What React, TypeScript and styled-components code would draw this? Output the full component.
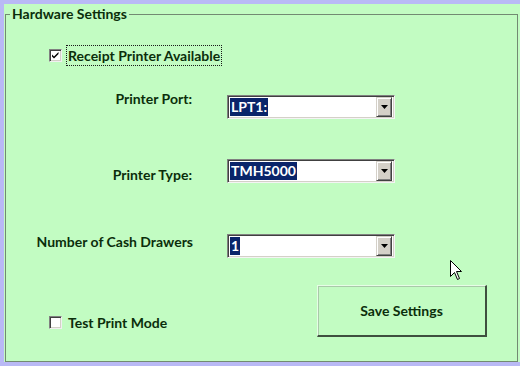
import React from "react";
import styled, { createGlobalStyle } from "styled-components";

const Global = createGlobalStyle`
  html, body { margin: 0; padding: 0; background: #b9b9f5; }
  body { font-family: Lato, "DejaVu Sans", sans-serif; }
`;

const TEXT = "#0b2e0b";
const GREEN = "#c2fcc2";

const Page = styled.div`
  position: relative;
  width: 520px;
  height: 366px;
  padding: 4px 0 4px 4px;
  box-sizing: border-box;
  background: #b9b9f5;
  overflow: hidden;
`;

const Panel = styled.div`
  background: ${GREEN};
  height: 358px;
  width: 516px;
  box-sizing: border-box;
  padding: 0 2px 0 1px;
`;

const Group = styled.fieldset`
  margin: 0;
  padding: 0;
  height: 358px;
  box-sizing: border-box;
  border: 1px solid #728a72;
  display: block;
  min-width: 0;
`;

const Legend = styled.legend`
  margin-left: 4px;
  padding: 0 2px;
  font-weight: 700;
  font-size: 14px;
  line-height: 20px;
  color: ${TEXT};
`;

const Body = styled.div`
  display: flex;
  flex-direction: column;
`;

const CheckRow = styled.label<{ $top: number }>`
  display: flex;
  align-items: center;
  height: 21px;
  margin-top: ${(p) => p.$top}px;
  padding-left: 43px;
  gap: 4px;
  cursor: default;
`;

const Box = styled.span`
  width: 13px;
  height: 13px;
  box-sizing: border-box;
  background: #fff;
  border-top: 1px solid #808080;
  border-left: 1px solid #808080;
  border-right: 1px solid #f0f0f0;
  border-bottom: 1px solid #f0f0f0;
  box-shadow: inset 1px 1px 0 #404040, inset -1px -1px 0 #d4d0c8;
  display: flex;
  align-items: center;
  justify-content: center;
  flex: none;
`;

const CheckText = styled.span<{ $focus?: boolean }>`
  font-weight: 700;
  font-size: 14px;
  line-height: 19px;
  color: ${TEXT};
  padding: 0 1px;
  border: 1px dotted ${(p) => (p.$focus ? "#1a1a1a" : "transparent")};
`;

const FieldRow = styled.div<{ $top: number }>`
  display: grid;
  grid-template-columns: 221px 168px;
  margin-top: ${(p) => p.$top}px;
  height: 24px;
`;

const FieldLabel = styled.span<{ $right: number; $top: number }>`
  justify-self: end;
  align-self: start;
  margin-right: ${(p) => p.$right}px;
  margin-top: ${(p) => p.$top}px;
  font-weight: 700;
  font-size: 14px;
  line-height: 16px;
  color: ${TEXT};
  white-space: nowrap;
`;

const Combo = styled.div`
  height: 24px;
  box-sizing: border-box;
  background: #fff;
  border-top: 1px solid #808080;
  border-left: 1px solid #808080;
  border-right: 1px solid #f4f4f4;
  border-bottom: 1px solid #f4f4f4;
  box-shadow: inset 1px 1px 0 #404040, inset -1px -1px 0 #d4d0c8;
  display: flex;
  align-items: center;
  padding: 2px;
`;

const ComboValue = styled.div`
  flex: 1;
  display: flex;
  align-items: center;
`;

const Selected = styled.span`
  background: #0a246a;
  color: #fff;
  font-weight: 700;
  font-size: 14px;
  line-height: 18px;
  padding: 0 1px;
`;

const DropButton = styled.div`
  width: 16px;
  height: 20px;
  box-sizing: border-box;
  background: #d4d0c8;
  border-top: 1px solid #d4d0c8;
  border-left: 1px solid #d4d0c8;
  border-right: 1px solid #404040;
  border-bottom: 1px solid #404040;
  box-shadow: inset 1px 1px 0 #fff, inset -1px -1px 0 #808080;
  display: flex;
  align-items: center;
  justify-content: center;
`;

const BottomRow = styled.div`
  display: flex;
  justify-content: space-between;
  align-items: flex-start;
  margin-top: 27px;
  padding-right: 30px;
`;

const SaveButton = styled.button`
  width: 170px;
  height: 52px;
  box-sizing: border-box;
  background: ${GREEN};
  border-top: 1px solid #e6fde6;
  border-left: 1px solid #e6fde6;
  border-right: 2px solid #3f4f3f;
  border-bottom: 2px solid #3f4f3f;
  box-shadow: inset 1px 1px 0 #a9c9a9;
  font-family: Lato, "DejaVu Sans", sans-serif;
  font-weight: 700;
  font-size: 14px;
  color: ${TEXT};
  padding: 0;
  cursor: default;
`;

const Cursor = styled.svg`
  position: absolute;
  left: 450px;
  top: 260px;
`;

const Arrow = () => (
  <svg width="7" height="4" viewBox="0 0 7 4">
    <path d="M0 0h7L3.5 4z" fill="#000" />
  </svg>
);

const Check = () => (
  <svg width="9" height="9" viewBox="0 0 9 9">
    <path d="M1 3.5l2 2 4.5-4.5v2L3 7.5 1 5.5z" fill="#000" />
  </svg>
);

const Select = ({ value }: { value: string }) => (
  <Combo>
    <ComboValue>
      <Selected>{value}</Selected>
    </ComboValue>
    <DropButton>
      <Arrow />
    </DropButton>
  </Combo>
);

export default function App() {
  return (
    <>
      <Global />
      <Page>
        <Panel>
          <Group>
            <Legend>Hardware Settings</Legend>
            <Body>
              <CheckRow $top={21}>
                <Box>
                  <Check />
                </Box>
                <CheckText $focus>Receipt Printer Available</CheckText>
              </CheckRow>
              <FieldRow $top={29}>
                <FieldLabel $right={35} $top={-4}>Printer Port:</FieldLabel>
                <Select value="LPT1:" />
              </FieldRow>
              <FieldRow $top={40}>
                <FieldLabel $right={35} $top={8}>Printer Type:</FieldLabel>
                <Select value="TMH5000" />
              </FieldRow>
              <FieldRow $top={51}>
                <FieldLabel $right={34} $top={0}>Number of Cash Drawers</FieldLabel>
                <Select value="1" />
              </FieldRow>
              <BottomRow>
                <CheckRow $top={27}>
                  <Box />
                  <CheckText>Test Print Mode</CheckText>
                </CheckRow>
                <SaveButton>Save Settings</SaveButton>
              </BottomRow>
            </Body>
          </Group>
        </Panel>
        <Cursor width="13" height="21" viewBox="0 0 13 21">
          <path d="M0.5 0.5V16.5L4.5 12.5L7.5 19.5L9.5 18.5L6.5 11.5H11.5Z" fill="#fff" stroke="#000" strokeWidth="1" />
        </Cursor>
      </Page>
    </>
  );
}
